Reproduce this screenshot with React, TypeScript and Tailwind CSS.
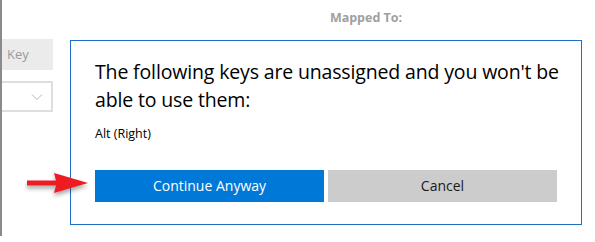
import React from 'react';

const font = { fontFamily: '"Open Sans", "Noto Sans", Arial, sans-serif' };

const RedArrow: React.FC = () => (
  <svg width="70" height="30" viewBox="0 0 70 30" className="absolute left-[24px] top-[169px]">
    <defs>
      <filter id="sh" x="-20%" y="-40%" width="140%" height="180%">
        <feDropShadow dx="0" dy="3" stdDeviation="2" floodColor="#000" floodOpacity="0.35" />
      </filter>
    </defs>
    <path d="M3 11.5 L32 11.5 L30 4 L64 14 L30 24 L32 16.5 L3 16.5 Z" fill="#ec1c24" filter="url(#sh)" />
  </svg>
);

export default function App() {
  return (
    <div className="relative w-[595px] h-[242px] bg-white overflow-hidden" style={font}>
      {/* background page */}
      <div className="flex h-full">
        <div className="w-[2px] h-[236px] bg-[#8a8a8a]" />
        <div className="flex flex-col w-[51px] pt-[39px] gap-[11px]">
          <div className="h-[31px] bg-[#ebebeb] flex items-center pl-[5px] text-[13px] text-[#9a9a9a]">Key</div>
          <div className="h-[31px] bg-white border-2 border-[#dedede] border-l-0 flex items-center justify-end pr-[8px]">
            <svg width="12" height="8" viewBox="0 0 12 8">
              <path d="M1 1.5 L6 6.5 L11 1.5" fill="none" stroke="#b8b8b8" strokeWidth="1" />
            </svg>
          </div>
        </div>
        <div className="flex-1 flex justify-center pl-[84px] pt-[9px]">
          <span className="text-[12.5px] font-bold text-[#a0a0a0] h-fit">Mapped To:</span>
        </div>
      </div>

      {/* dialog */}
      <div className="absolute left-[70px] top-[40px] w-[512px] h-[185px] bg-white border border-[#1f70c1] pl-[24px] pr-[24px] pt-[17px]">
        <p className="text-[19.5px] leading-[28px] tracking-[-0.15px] text-black whitespace-nowrap">
          The following keys are unassigned and you won't be
          <br />
          able to use them:
        </p>
        <p className="text-[12.5px] text-black mt-[11px]">Alt (Right)</p>
        <div className="flex gap-[4px] mt-[26px] w-[462px]">
          <button className="flex-1 h-[32px] bg-[#0078d7] text-white text-[14px]">Continue Anyway</button>
          <button className="flex-1 h-[32px] bg-[#cccccc] text-[#1a1a1a] text-[14px]">Cancel</button>
        </div>
      </div>

      <RedArrow />
    </div>
  );
}
